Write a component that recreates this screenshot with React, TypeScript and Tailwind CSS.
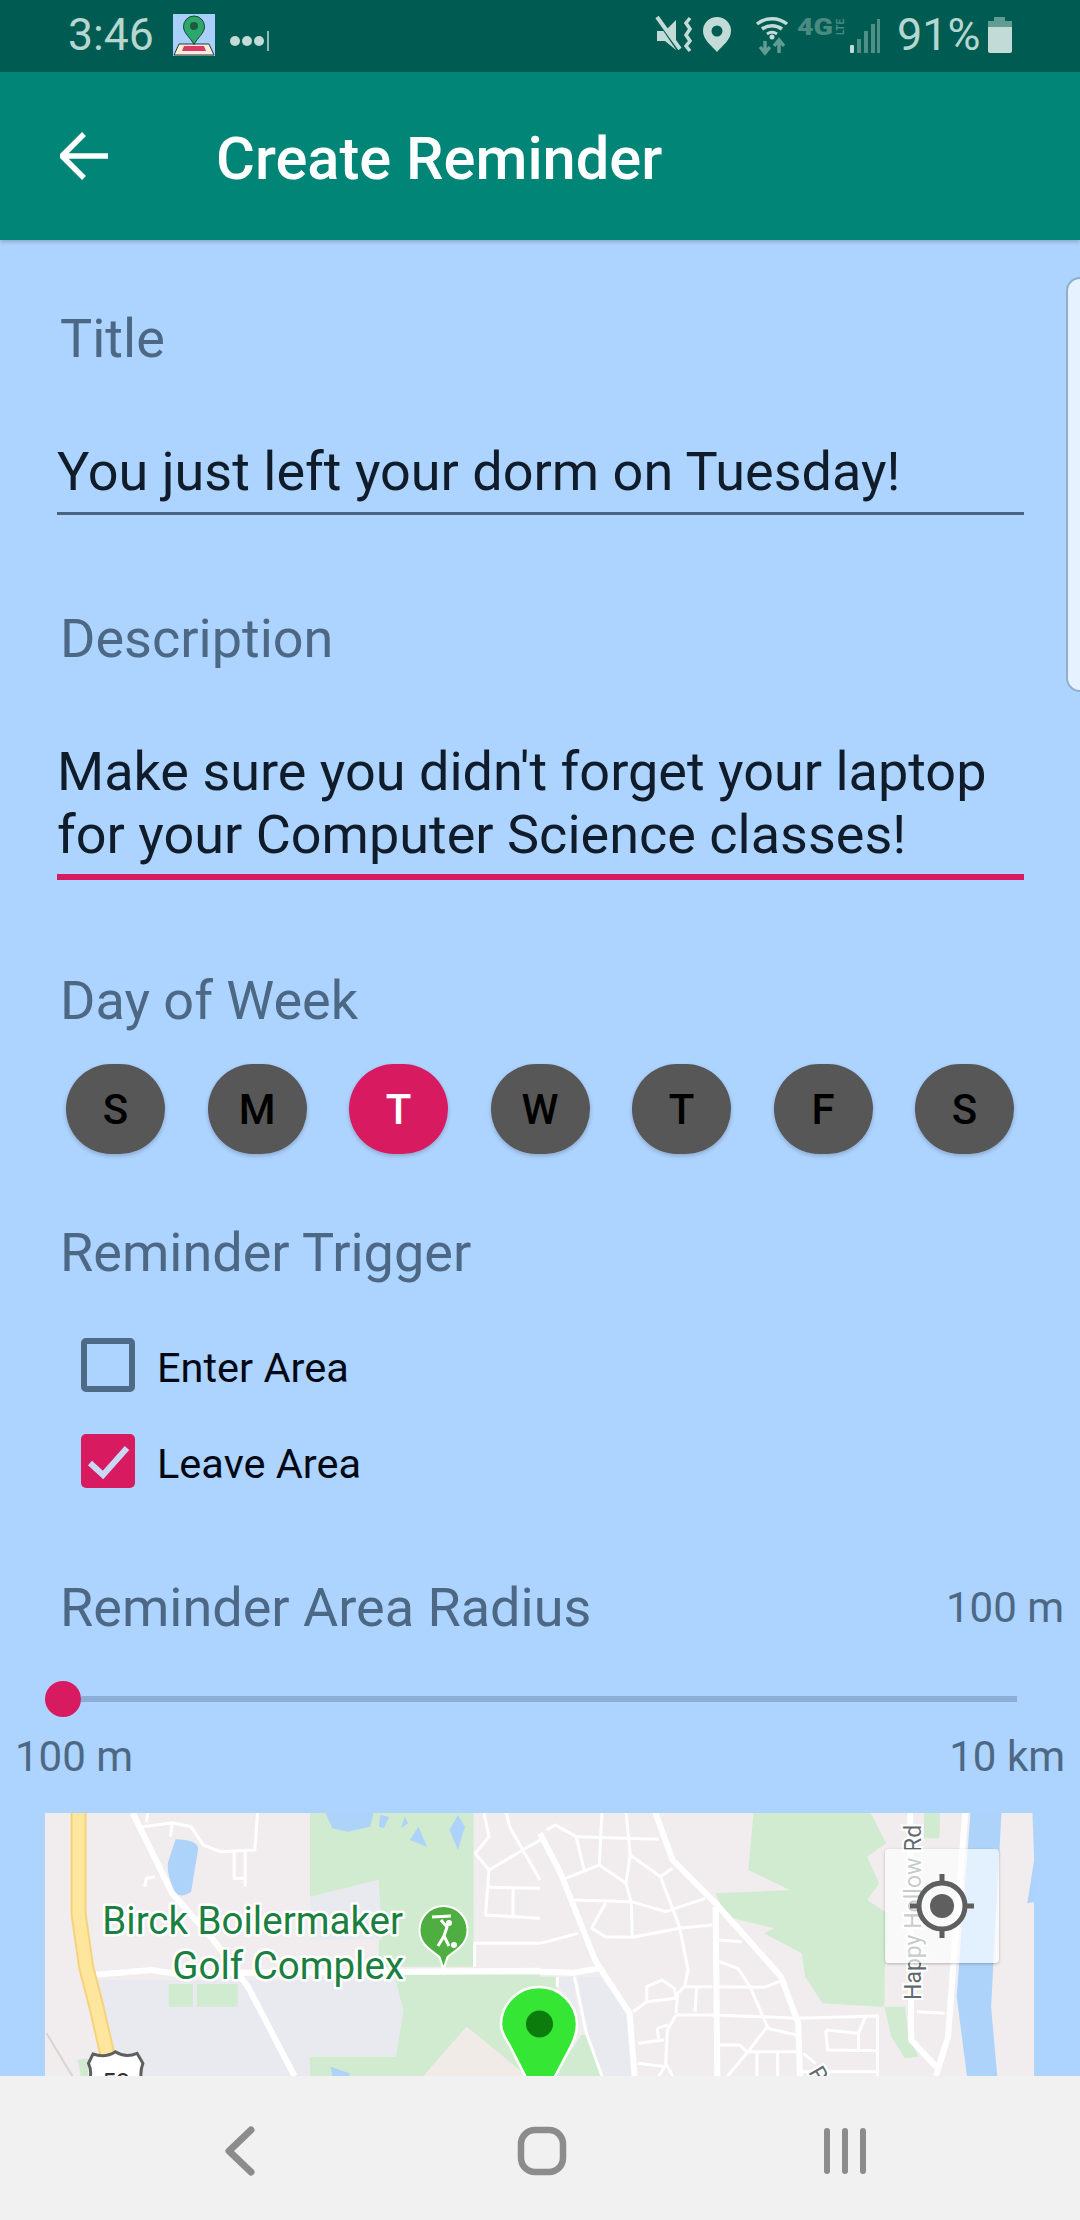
const labelCls = "text-[54px] leading-[62px] text-[#4c6884] whitespace-nowrap";

const days = ["S", "M", "T", "W", "T", "F", "S"];

function StatusIcons() {
  return (
    <svg width="370" height="72" viewBox="650 0 370 72" className="absolute left-[650px] top-0">
      {/* muted speaker with vibration */}
      <path d="M657 31 h8 l11 -11 v30 l-11 -9 h-8 z" fill="#c3dbd6" />
      <path d="M657 19 L678 50" stroke="#005c52" strokeWidth="3" />
      <path d="M657 17 L680 49" stroke="#c3dbd6" strokeWidth="4" />
      <path d="M690 18 l-4 5 l4 6 l-4 6 l4 6 l-4 5 l4 5" fill="none" stroke="#c3dbd6" strokeWidth="3.5" />
      {/* location pin */}
      <path d="M717 17 a14 14 0 0 1 14 14 c0 9 -9 15 -14 21 c-5 -6 -14 -12 -14 -21 a14 14 0 0 1 14 -14 z" fill="#c3dbd6" />
      <circle cx="717" cy="31" r="5.5" fill="#005c52" />
      {/* wifi */}
      <path d="M757 24 a24 24 0 0 1 30 0" fill="none" stroke="#c3dbd6" strokeWidth="3.5" />
      <path d="M762 29 a17 17 0 0 1 20 0" fill="none" stroke="#c3dbd6" strokeWidth="3.5" />
      <path d="M767 34 a9 9 0 0 1 10 0" fill="none" stroke="#c3dbd6" strokeWidth="3" />
      <circle cx="772" cy="37" r="2.5" fill="#c3dbd6" />
      <path d="M765 41 v11 M760 47 l5 6 l5 -6 M779 53 v-12 M774 46 l5 -6 l5 6" fill="none" stroke="#5f9c92" strokeWidth="3.5" />
      {/* 4G LTE */}
      <text x="797" y="35" fill="#4a8b81" fontFamily="Roboto, sans-serif" fontWeight="900" fontSize="23" textLength="36" lengthAdjust="spacingAndGlyphs">4G</text>
      <text x="0" y="0" transform="translate(844 35) rotate(-90)" fill="#4a8b81" fontFamily="Roboto, sans-serif" fontWeight="700" fontSize="10">LTE</text>
      {/* signal */}
      <rect x="850" y="45" width="4" height="8" rx="1" fill="#c3dbd6" />
      <rect x="857" y="39" width="4" height="14" fill="#4f8f85" />
      <rect x="864" y="31" width="4" height="22" fill="#4f8f85" />
      <rect x="871" y="24" width="4" height="29" fill="#4f8f85" />
      <rect x="877" y="19" width="3" height="34" fill="#4f8f85" />
      {/* battery */}
      <path d="M994 17 h11 v4 h7 v8 h-24 v-8 h6 z" fill="#5f9c92" />
      <path d="M988 27 h24 v24 a2 2 0 0 1 -2 2 h-20 a2 2 0 0 1 -2 -2 z" fill="#c3dbd6" />
    </svg>
  );
}

function AppIcon() {
  return (
    <svg width="42" height="42" viewBox="0 0 42 42" className="absolute left-[173px] top-[14px]">
      <rect width="42" height="42" fill="#a9d0fb" />
      <path d="M6 30 h30 l5 11 H1 z" fill="#f5efd8" stroke="#333" strokeWidth="1" />
      <path d="M11 32 h20 l2 5 H9 z" fill="#d83a6c" />
      <path d="M21 2 a10.5 10.5 0 0 1 10.5 10.5 c0 7 -7 11 -10.5 18 c-3.5 -7 -10.5 -11 -10.5 -18 A10.5 10.5 0 0 1 21 2 z" fill="#2ca86c" stroke="#14452c" strokeWidth="1" />
      <circle cx="21" cy="12" r="4" fill="#1f5a3e" />
    </svg>
  );
}

const Z4 = "translate(0 1780) scale(0.34435 0.33333)";
const Z5 = "translate(540 1780) scale(0.34435 0.33333)";

const major4 = ["M385 98 L500 340 L620 480 L720 620 L855 888", "M270 585 L440 570 L500 580 L1568 572"];
const major5 = [
  "M0 160 L60 280 L160 540 L175 565 L260 700 L275 888",
  "M335 98 L385 240 L510 370 L700 590 L750 730 L755 888",
  "M510 380 L515 888",
  "M0 575 L100 578 L170 565",
  "M1075 98 L1078 780 L1150 860",
  "M1235 98 L1200 560 L1185 770 L1150 888",
];
const minor4 = [
  "M415 140 L500 128 L555 140 L590 195 L640 215 L740 210 L748 98",
  "M430 98 L425 125",
  "M500 128 L495 170",
  "M680 215 L680 295 L712 295 L712 320 M712 215 L712 295",
  "M420 320 L425 295 L450 290",
  "M1405 98 L1420 170 L1380 220 L1420 270 L1568 180",
  "M1470 98 L1480 140 L1568 300",
  "M1420 270 L1410 405 L1568 415",
  "M1415 322 L1568 325 M1490 320 L1490 410",
  "M1378 560 L1378 490 L1568 490",
];
const minor5 = [
  "M180 98 L172 255 L75 295",
  "M250 98 L262 225 L250 310 L265 370 L268 470",
  "M105 170 L345 178",
  "M20 150 L45 135 L105 170 L128 270",
  "M262 225 L350 290 L385 265",
  "M172 255 L250 310",
  "M350 290 L405 440 L430 570 L420 620 L400 640 L395 700",
  "M95 360 L265 365 L365 395 L480 355",
  "M190 370 L150 445 L190 470 L268 472 L405 445 L500 435",
  "M0 490 L110 460",
  "M520 480 L585 485",
  "M520 545 L575 565 L610 620 L660 740 L600 820 L545 888",
  "M420 620 L500 620 M520 620 L650 622 L695 605",
  "M310 620 L355 600 L390 625 L395 655 L310 665 Z",
  "M270 695 L310 665",
  "M395 705 L510 705 L750 715 L980 708 L980 888",
  "M395 705 L370 750 L365 850 L385 888",
  "M340 745 L370 735 M340 745 L345 780 M285 790 L360 780 M285 850 L365 860 M345 888 L365 855",
  "M520 795 L580 795 L600 815 L745 815 M630 820 L630 888 M690 820 L690 888",
  "M660 745 L745 765",
  "M765 820 L800 850",
  "M830 750 L925 760 L945 710 M830 750 L835 810 L980 812 M925 760 L925 808",
  "M760 875 L980 875",
  "M455 625 L450 695",
  "M50 590 L50 620 M100 590 L135 760 L180 888",
  "M1095 695 L1175 700",
];

function MapArt() {
  return (
    <svg width="989" height="263" viewBox="45 1813 989 263" className="block">
      <rect x="45" y="1813" width="989" height="263" fill="#f1edef" />
      <g transform={Z4}>
        {/* park */}
        <path d="M900 98 L1375 98 L1375 560 L1100 560 L1100 300 L900 350 Z" fill="#d0ebd0" />
        <path d="M900 350 L1100 300 L1110 480 L900 480 Z" fill="#e8eaef" />
        <path d="M1145 585 L1568 585 L1568 888 L1530 888 L1355 740 L1230 888 L900 888 L900 830 L1150 830 L1170 690 Z" fill="#d0ebd0" />
        <path d="M1355 740 L1530 888 L1230 888 Z" fill="#f0ebe6" />
        <path d="M280 600 L1145 600 L1172 690 L1150 828 L900 828 L900 888 L350 888 Z" fill="#e8eaef" />
        <path d="M490 612 L560 612 L560 680 L490 680 Z M572 612 L690 612 L690 680 L572 680 Z" fill="#d0ebd0" />
        <path d="M225 840 L255 835 L255 888 L235 888 Z" fill="#d0ebd0" />
        {/* water */}
        <path d="M945 98 L1085 98 L1075 140 L1010 155 L965 145 Z" fill="#aed3fb" />
        <path d="M1105 105 L1130 110 L1115 145 L1100 140 Z M1175 110 L1185 130 L1165 145 Z M1215 140 L1240 200 L1190 180 Z M1330 105 L1350 140 L1330 210 L1305 150 Z" fill="#aed3fb" />
        <path d="M510 178 Q580 180 575 210 L555 335 Q520 360 505 330 Q480 270 490 240 Z" fill="#aed3fb" />
        <path d="M960 860 L1015 880 L1015 888 L965 888 Z" fill="#aed3fb" />
        <path d="M135 760 L210 888" fill="none" stroke="#d8d4d2" strokeWidth="2" vectorEffect="non-scaling-stroke" />
        {major4.map((d, i) => (
          <path key={i} d={d} fill="none" stroke="#ffffff" strokeWidth="6" strokeLinejoin="round" vectorEffect="non-scaling-stroke" />
        ))}
        {minor4.map((d, i) => (
          <path key={i} d={d} fill="none" stroke="#ffffff" strokeWidth="3" strokeLinejoin="round" vectorEffect="non-scaling-stroke" />
        ))}
        {/* highway */}
        <path d="M228 98 L228 400 L250 560 L280 680 L312 825" fill="none" stroke="#f6d27c" strokeWidth="16" strokeLinejoin="round" vectorEffect="non-scaling-stroke" />
        <path d="M228 98 L228 400 L250 560 L280 680 L312 825" fill="none" stroke="#fee79d" strokeWidth="12" strokeLinejoin="round" vectorEffect="non-scaling-stroke" />
        {/* route shield */}
        <path d="M270 822 Q305 835 335 815 Q365 835 398 820 L415 850 Q405 880 412 900 L260 900 Q268 875 257 850 Z" fill="#ffffff" stroke="#5f5f5f" strokeWidth="3" vectorEffect="non-scaling-stroke" />
      </g>
      <text x="116" y="2092" fontSize="25" fontFamily="Roboto, sans-serif" textAnchor="middle" fill="#333">52</text>

      <g transform={Z5}>
        <path d="M620 98 L960 98 L1005 190 L950 230 L985 310 L950 360 L1010 400 L1000 600 L1000 680 L1020 770 L1060 835 L1100 830 L1070 770 L1060 680 L985 680 L820 670 L770 590 L760 520 L650 460 L680 445 L540 410 L510 340 L725 330 L605 270 Z" fill="#d0ebd0" />
        <path d="M1115 98 L1162 98 L1160 175 L1115 175 Z" fill="#d0ebd0" />
        <path d="M0 590 L48 590 L48 640 L0 620 Z" fill="#d0ebd0" />
        <path d="M110 590 L175 590 L255 700 L265 888 L180 888 L135 760 Z" fill="#e8eaef" />
        <path d="M120 765 L135 765 L180 888 L40 888 Z" fill="#d0ebd0" />
        <path d="M55 590 L100 590 L108 700 L55 620 Z" fill="#e8eaef" />
        {/* river */}
        <path d="M1250 98 L1340 98 L1310 680 L1328 888 L1240 888 L1210 650 Z" fill="#aed3fb" />
        <path d="M1430 98 L1440 98 L1440 365 L1415 370 L1435 240 Z" fill="#aed3fb" />
        {major5.map((d, i) => (
          <path key={i} d={d} fill="none" stroke="#ffffff" strokeWidth="6" strokeLinejoin="round" vectorEffect="non-scaling-stroke" />
        ))}
        {minor5.map((d, i) => (
          <path key={i} d={d} fill="none" stroke="#ffffff" strokeWidth="3" strokeLinejoin="round" vectorEffect="non-scaling-stroke" />
        ))}
      </g>

      {/* labels */}
      <g fontFamily="Roboto, sans-serif" fontSize="38.5" fill="#1b7f40" stroke="#ffffff" strokeWidth="5" strokeLinejoin="round" style={{ paintOrder: "stroke" }} textAnchor="end">
        <text x="403" y="1934">Birck Boilermaker</text>
        <text x="404" y="1979">Golf Complex</text>
      </g>
      <text transform="translate(921 2000) rotate(-90)" fontFamily="Roboto, sans-serif" fontSize="23" fill="#5f6a6e" stroke="#ffffff" strokeWidth="4" style={{ paintOrder: "stroke" }}>Happy Hollow Rd</text>
      <text transform="translate(808 2072) rotate(60)" fontFamily="Roboto, sans-serif" fontSize="23" fill="#5f6a6e" stroke="#ffffff" strokeWidth="4" style={{ paintOrder: "stroke" }}>R</text>

      {/* golf marker */}
      <path d="M443.5 1906 a24 24 0 0 1 24 24 c0 15 -12 20 -20 27 l-4 12 l-4 -12 c-8 -7 -20 -12 -20 -27 a24 24 0 0 1 24 -24 z" fill="#4fae41" stroke="#ffffff" strokeWidth="2" />
      <circle cx="449" cy="1923" r="3" fill="#fff" />
      <path d="M432 1917 L451 1916 M441 1920 L447 1927 L444 1936 L449 1946 M444 1936 L438 1946" fill="none" stroke="#fff" strokeWidth="3" />
      <circle cx="454" cy="1945" r="3" fill="#fff" />

      {/* green pin */}
      <path d="M539 1987 a38 38 0 0 1 38 37 c0 10 -3 16 -6 22 L540 2105 L510 2046 c-4 -7 -9 -13 -9 -22 a38 38 0 0 1 38 -37 z" fill="#35e635" stroke="#ffffff" strokeWidth="2.5" />
      <circle cx="539.5" cy="2024" r="13.5" fill="#0c7c0c" />
    </svg>
  );
}

export default function App() {
  return (
    <div className="relative flex h-[2220px] w-[1080px] flex-col overflow-hidden bg-[#add3ff] font-['Roboto',sans-serif]">
      {/* status bar */}
      <div className="relative h-[72px] shrink-0 bg-[#005c52]">
        <span className="absolute left-[68px] top-[9px] text-[44.5px] leading-[52px] text-[#b6d6d0]">3:46</span>
        <AppIcon />
        <div className="absolute left-[230px] top-[31px] flex items-center gap-[2px]">
          <span className="h-[10px] w-[10px] rounded-full bg-[#c3dbd6]" />
          <span className="h-[10px] w-[10px] rounded-full bg-[#c3dbd6]" />
          <span className="h-[10px] w-[10px] rounded-full bg-[#c3dbd6]" />
          <span className="ml-[1px] h-[20px] w-[2px] bg-[#8fbbb3]" />
        </div>
        <StatusIcons />
        <span className="absolute left-[897px] top-[9px] text-[45px] leading-[52px] text-[#b6d6d0]">91%</span>
      </div>

      {/* app bar */}
      <div className="flex h-[168px] shrink-0 items-center bg-[#018577] pl-[60px] shadow-[0_2px_4px_rgba(0,0,0,0.2)]">
        <svg width="48" height="48" viewBox="0 0 48 48" className="shrink-0">
          <path d="M48 24 H3 M24 2 L2 24 L24 46" fill="none" stroke="#ffffff" strokeWidth="5.5" />
        </svg>
        <span className="ml-[108px] pt-[5px] text-[59.6px] font-medium leading-[70px] text-white">Create Reminder</span>
      </div>

      {/* form */}
      <div className="relative min-h-0 flex-1 overflow-hidden">
        <div className="pt-[68px]">
          <div className={`ml-[60px] ${labelCls}`}>Title</div>
          <div className="ml-[57px] mt-[71px] w-[967px] border-b-[3px] border-[#4a6480] pb-[9px] text-[54px] leading-[62px] whitespace-nowrap text-[#101c2a]">
            You just left your dorm on Tuesday!
          </div>

          <div className={`ml-[60px] mt-[93px] ${labelCls}`}>Description</div>
          <div className="ml-[57px] mt-[71px] w-[967px] border-b-[6px] border-[#d81b60] pb-[8px] text-[54px] leading-[62.5px] whitespace-nowrap text-[#101c2a]">
            Make sure you didn't forget your laptop
            <br />
            for your Computer Science classes!
          </div>

          <div className={`ml-[60px] mt-[90px] ${labelCls}`}>Day of Week</div>
          <div className="ml-[66px] mt-[32px] flex w-[948px] justify-between">
            {days.map((d, i) => (
              <div
                key={i}
                className={`flex h-[90px] w-[99px] items-center justify-center rounded-full text-[42px] font-medium shadow-[0_2px_4px_rgba(0,0,0,0.2)] ${i === 2 ? "bg-[#d81b60] text-white" : "bg-[#575757] text-black"}`}
              >
                {d}
              </div>
            ))}
          </div>

          <div className={`ml-[60px] mt-[68px] ${labelCls}`}>Reminder Trigger</div>
          <div className="ml-[81px] mt-[54px] flex h-[54px] items-center">
            <div className="h-[54px] w-[54px] rounded-[5px] border-[6px] border-[#4f6a86]" />
            <span className="ml-[22px] pt-[5px] text-[41.5px] leading-[48px] text-[#020814]">Enter Area</span>
          </div>
          <div className="ml-[81px] mt-[42px] flex h-[54px] items-center">
            <div className="flex h-[54px] w-[54px] items-center justify-center rounded-[5px] bg-[#d81b60]">
              <svg width="44" height="44" viewBox="0 0 44 44">
                <path d="M4 24 L17 36 L41 9" fill="none" stroke="#c9d8f5" strokeWidth="6" />
              </svg>
            </div>
            <span className="ml-[22px] pt-[5px] text-[41.5px] leading-[48px] text-[#020814]">Leave Area</span>
          </div>

          <div className="mr-[16px] mt-[89px] flex items-center justify-between pl-[60px]">
            <span className={labelCls}>Reminder Area Radius</span>
            <span className="text-[42px] leading-[48px] text-[#4c6884]">100 m</span>
          </div>

          <div className="ml-[45px] mt-[42px] flex h-[36px] w-[972px] items-center">
            <div className="h-[36px] w-[36px] shrink-0 rounded-full bg-[#d81b60]" />
            <div className="h-[6px] flex-1 bg-[#8cadd5]" />
          </div>

          <div className="mx-[15px] mt-[16px] flex justify-between text-[42px] leading-[48px] text-[#4c6884]">
            <span>100 m</span>
            <span>10 km</span>
          </div>

          <div className="relative ml-[45px] mt-[32px] h-[263px] w-[989px] overflow-hidden">
            <MapArt />
            <div className="absolute left-[840px] top-[36px] flex h-[114px] w-[114px] items-center justify-center rounded-[4px] bg-white/65 shadow-[0_1px_3px_rgba(0,0,0,0.25)]">
              <svg width="66" height="66" viewBox="0 0 66 66">
                <circle cx="33" cy="33" r="23" fill="none" stroke="#5f5f5f" strokeWidth="5" />
                <circle cx="33" cy="33" r="12" fill="#5f5f5f" />
                <path d="M33 1 V10 M33 56 V65 M1 33 H10 M56 33 H65" stroke="#5f5f5f" strokeWidth="5" />
              </svg>
            </div>
          </div>
        </div>

        {/* scrollbar */}
        <div className="absolute right-0 top-[37px] h-[415px] w-[14px] rounded-l-[14px] border-y-2 border-l-2 border-[#93aecd] bg-[#e6f2ff]" />
      </div>

      {/* navigation bar */}
      <div className="flex h-[144px] shrink-0 items-center justify-between bg-[#f1f1f1] pl-[225px] pr-[213px] pt-[6px]">
        <svg width="30" height="50" viewBox="0 0 30 50">
          <path d="M26 4 L4 25 L26 46" fill="none" stroke="#8c8c8c" strokeWidth="7" strokeLinecap="round" strokeLinejoin="round" />
        </svg>
        <svg width="52" height="52" viewBox="0 0 52 52" className="ml-[6px]">
          <rect x="5" y="5" width="42" height="42" rx="14" fill="none" stroke="#8c8c8c" strokeWidth="6.5" />
        </svg>
        <svg width="44" height="48" viewBox="0 0 44 48">
          <path d="M4 4 V44 M22 4 V44 M40 4 V44" fill="none" stroke="#8c8c8c" strokeWidth="6" strokeLinecap="round" />
        </svg>
      </div>
    </div>
  );
}
